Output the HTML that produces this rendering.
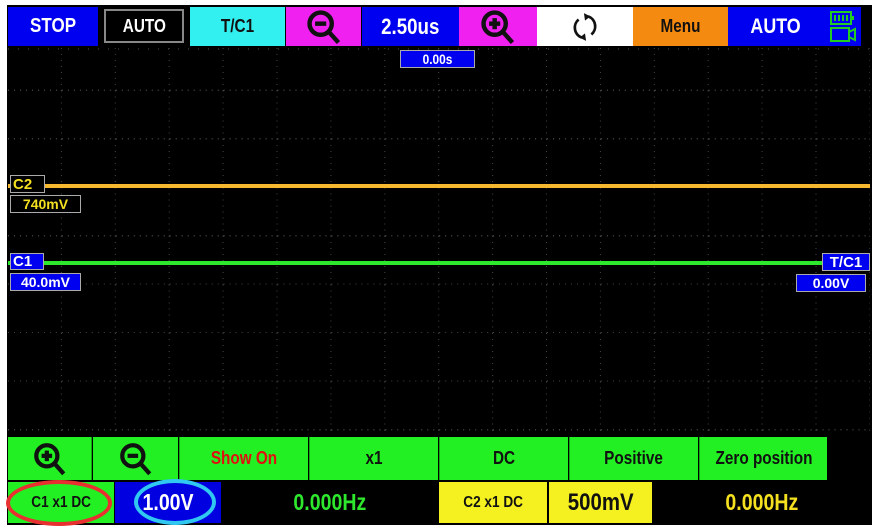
<!DOCTYPE html><html><head><style>
body{margin:0;width:877px;height:528px;background:#fff;position:relative;overflow:hidden;font-family:"Liberation Sans",sans-serif;font-weight:bold}
.a{position:absolute;box-sizing:border-box;display:flex;align-items:center;justify-content:center;white-space:nowrap}
.a span{display:inline-block;transform:scaleX(0.85)}
</style></head><body>
<div class="a" style="left:7px;top:5px;width:865px;height:520px;background:#000"></div>
<svg class="a" style="left:8px;top:47px" width="862" height="388">
<defs><pattern id="g" width="53.9" height="48.5" patternUnits="userSpaceOnUse" x="0" y="-5">
<line x1="53.4" y1="0" x2="53.4" y2="48.5" stroke="#444" stroke-dasharray="1 5"/>
<line x1="0" y1="48" x2="53.9" y2="48" stroke="#444" stroke-dasharray="1 5"/></pattern></defs>
<rect width="862" height="388" fill="url(#g)"/>
<line x1="0" y1="2" x2="862" y2="2" stroke="#555" stroke-dasharray="1 9"/>
<rect x="0" y="137" width="862" height="4" fill="#f5b82e"/>
<rect x="0" y="214" width="862" height="4" fill="#2ee82e"/>
</svg>
<div class="a" style="left:8px;top:7px;width:90px;height:39px;background:#0000f0;color:#fff;font-size:20px"><span>STOP</span></div>
<div class="a" style="left:104px;top:9px;width:80px;height:34px;background:#000;border:2px solid #888;color:#fff;font-size:18px"><span>AUTO</span></div>
<div class="a" style="left:190px;top:7px;width:95px;height:39px;background:#33f0f0;color:#111;font-size:18px"><span>T/C1</span></div>
<div class="a" style="left:286px;top:7px;width:75px;height:39px;background:#f020f0"><svg width="40" height="40" viewBox="0 0 36 36"><circle cx="15" cy="15" r="10" fill="none" stroke="#111" stroke-width="4"/><line x1="10" y1="15" x2="20" y2="15" stroke="#111" stroke-width="4"/><line x1="22" y1="22" x2="31" y2="32" stroke="#111" stroke-width="4"/></svg></div>
<div class="a" style="left:362px;top:7px;width:97px;height:39px;background:#0000f0;color:#fff;font-size:22px"><span>2.50us</span></div>
<div class="a" style="left:459px;top:7px;width:78px;height:39px;background:#f020f0"><svg width="40" height="40" viewBox="0 0 36 36"><circle cx="15" cy="15" r="10" fill="none" stroke="#111" stroke-width="4"/><line x1="10" y1="15" x2="20" y2="15" stroke="#111" stroke-width="4"/><line x1="15" y1="10" x2="15" y2="20" stroke="#111" stroke-width="4"/><line x1="22" y1="22" x2="31" y2="32" stroke="#111" stroke-width="4"/></svg></div>
<div class="a" style="left:537px;top:7px;width:96px;height:39px;background:#fff"><svg width="32" height="32" viewBox="0 0 30 30"><path d="M9 8 A10 10 0 0 0 12 25" fill="none" stroke="#111" stroke-width="2.5"/><path d="M21 22 A10 10 0 0 0 18 5" fill="none" stroke="#111" stroke-width="2.5"/><path d="M14 2 L20 5 L15 9Z M16 28 L10 25 L15 21Z" fill="#111"/></svg></div>
<div class="a" style="left:633px;top:7px;width:95px;height:39px;background:#f58a10;color:#111;font-size:18px"><span>Menu</span></div>
<div class="a" style="left:728px;top:7px;width:96px;height:39px;background:#0000f0;color:#fff;font-size:21px"><span>AUTO</span></div>
<div class="a" style="left:824px;top:7px;width:37px;height:39px;background:#0000f0"><svg width="30" height="36" viewBox="0 0 30 36"><rect x="3" y="3" width="20" height="12" fill="none" stroke="#2c2" stroke-width="2"/><rect x="23" y="7" width="3" height="4" fill="#2c2"/><path d="M7 6v6M11 6v6M15 6v6M19 6v6" stroke="#2c2" stroke-width="2"/><rect x="3" y="19" width="18" height="13" fill="none" stroke="#2c2" stroke-width="2"/><path d="M21 23 L27 20 V31 L21 28" fill="none" stroke="#2c2" stroke-width="2"/></svg></div>
<div class="a" style="left:400px;top:50px;width:75px;height:18px;background:#0000f0;border:1px solid #aaa;color:#fff;font-size:14px"><span>0.00s</span></div>
<div class="a" style="left:10px;top:175px;width:35px;height:18px;background:#000;border:1px solid #aaa;color:#f5e020;font-size:15px;justify-content:flex-start;padding-left:2px">C2</div>
<div class="a" style="left:10px;top:195px;width:71px;height:18px;background:#000;border:1px solid #aaa;color:#f5e020;font-size:14px">740mV</div>
<div class="a" style="left:10px;top:253px;width:34px;height:17px;background:#0000f0;border:1px solid #aaa;color:#fff;font-size:15px;justify-content:flex-start;padding-left:2px">C1</div>
<div class="a" style="left:10px;top:273px;width:71px;height:18px;background:#0000f0;border:1px solid #aaa;color:#fff;font-size:14px">40.0mV</div>
<div class="a" style="left:822px;top:253px;width:48px;height:18px;background:#0000f0;border:1px solid #aaa;color:#fff;font-size:15px">T/C1</div>
<div class="a" style="left:796px;top:274px;width:70px;height:18px;background:#0000f0;border:1px solid #aaa;color:#fff;font-size:14px">0.00V</div>
<div class="a" style="left:8px;top:437px;width:84px;height:43px;background:#22f022;border-right:1px solid #1a1"><svg width="38" height="38" viewBox="0 0 36 36"><circle cx="15" cy="15" r="10" fill="none" stroke="#111" stroke-width="4"/><line x1="10" y1="15" x2="20" y2="15" stroke="#111" stroke-width="4"/><line x1="15" y1="10" x2="15" y2="20" stroke="#111" stroke-width="4"/><line x1="22" y1="22" x2="31" y2="32" stroke="#111" stroke-width="4"/></svg></div>
<div class="a" style="left:93px;top:437px;width:85px;height:43px;background:#22f022"><svg width="38" height="38" viewBox="0 0 36 36"><circle cx="15" cy="15" r="10" fill="none" stroke="#111" stroke-width="4"/><line x1="10" y1="15" x2="20" y2="15" stroke="#111" stroke-width="4"/><line x1="22" y1="22" x2="31" y2="32" stroke="#111" stroke-width="4"/></svg></div>
<div class="a" style="left:179px;top:437px;width:129px;height:43px;background:#22f022;color:#e01010;font-size:18px;border-left:1px solid #1a1"><span>Show On</span></div>
<div class="a" style="left:309px;top:437px;width:129px;height:43px;background:#22f022;color:#111;font-size:18px;border-left:1px solid #1a1"><span>x1</span></div>
<div class="a" style="left:439px;top:437px;width:129px;height:43px;background:#22f022;color:#111;font-size:18px;border-left:1px solid #1a1"><span>DC</span></div>
<div class="a" style="left:569px;top:437px;width:129px;height:43px;background:#22f022;color:#111;font-size:18px;border-left:1px solid #1a1"><span>Positive</span></div>
<div class="a" style="left:699px;top:437px;width:128px;height:43px;background:#22f022;color:#111;font-size:18px;border-left:1px solid #1a1"><span>Zero position</span></div>
<div class="a" style="left:8px;top:482px;width:106px;height:41px;background:#22f022;color:#111;font-size:16px"><span>C1 x1 DC</span></div>
<div class="a" style="left:6px;top:480px;width:106px;height:46px;border:4px solid #e83030;border-radius:50%"></div>
<div class="a" style="left:115px;top:482px;width:106px;height:41px;background:#0000e0;color:#fff;font-size:23px"><span>1.00V</span></div>
<div class="a" style="left:134px;top:479px;width:82px;height:46px;border:4px solid #30c8f0;border-radius:50%"></div>
<div class="a" style="left:222px;top:482px;width:216px;height:41px;background:#000;color:#2ee82e;font-size:23px"><span>0.000Hz</span></div>
<div class="a" style="left:439px;top:482px;width:108px;height:41px;background:#f5f020;color:#111;font-size:16px"><span>C2 x1 DC</span></div>
<div class="a" style="left:549px;top:482px;width:103px;height:41px;background:#f5f020;color:#111;font-size:24px"><span>500mV</span></div>
<div class="a" style="left:653px;top:482px;width:217px;height:41px;background:#000;color:#f5e020;font-size:23px"><span>0.000Hz</span></div>
</body></html>
